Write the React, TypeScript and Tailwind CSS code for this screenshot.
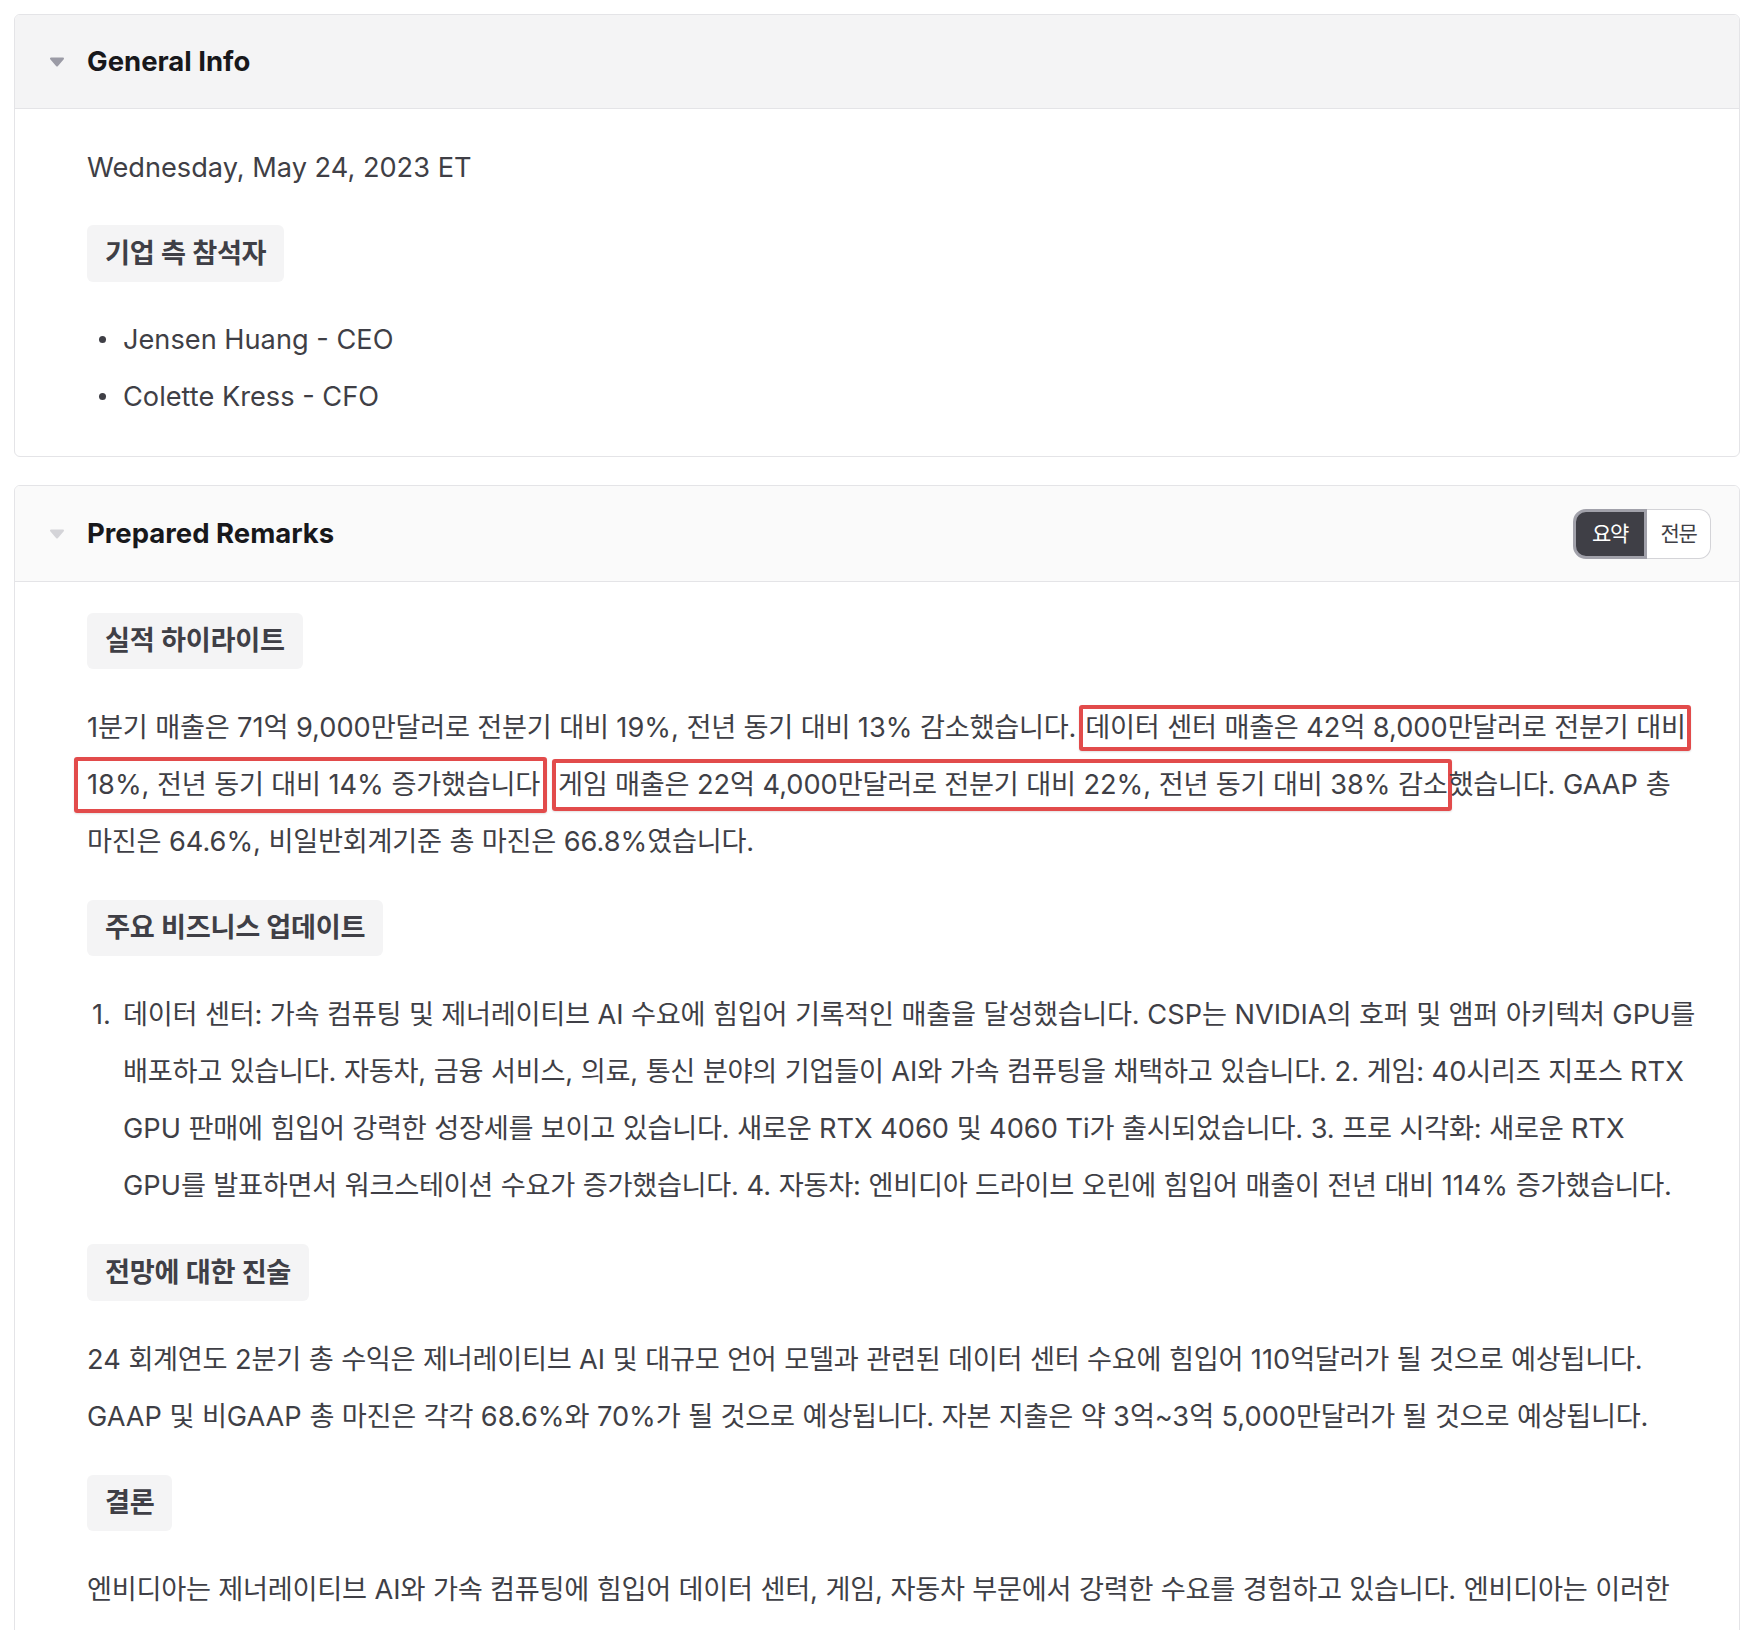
import React from 'react';

// Hangul runs get a touch of tracking so Noto's syllables sit like the reference face
const HANGUL = /([\uac00-\ud7a3]+)/;

function Ko({ text }: { text: string }) {
  return (
    <>
      {text.split(HANGUL).map((part, i) =>
        /[\uac00-\ud7a3]/.test(part) ? (
          <span key={i} className="tracking-[-0.01em]">
            {part}
          </span>
        ) : (
          part
        )
      )}
    </>
  );
}

const Caret = ({ color }: { color: string }) => (
  <svg width="16" height="10" viewBox="0 0 16 10" fill={color} stroke={color} strokeWidth="2" strokeLinejoin="round">
    <path d="M2 1.5h12L8 8.5z" />
  </svg>
);

const Badge = ({ text, tall = false }: { text: string; tall?: boolean }) => (
  <h3
    className={`flex items-center rounded-[6px] bg-[#f4f4f5] px-[18px] text-[27.2px] font-bold leading-none text-[#3f3f46] ${
      tall ? 'h-[57px]' : 'h-[56px]'
    }`}
  >
    <span>
      <Ko text={text} />
    </span>
  </h3>
);

const Bullet = ({ children }: { children: React.ReactNode }) => (
  <li className="flex items-center">
    <span className="ml-[12px] mr-[17px] h-[7px] w-[7px] shrink-0 rounded-full bg-[#3f3f46]" />
    <span>{children}</span>
  </li>
);

// red annotation box around a run of text
const Mark = ({ className, text }: { className: string; text: string }) => (
  <span
    className={`inline-block rounded-[3px] border-4 border-[#e24b4b] shadow-[0_1px_2px_rgba(0,0,0,0.12)] ${className}`}
  >
    <Ko text={text} />
  </span>
);

export default function App() {
  return (
    <div className="h-[1630px] overflow-hidden bg-white pt-[14px] pr-[16px] pl-[14px] font-[family-name:Inter,'Noto_Sans_CJK_KR',sans-serif] text-[#3f3f46]">
      {/* General Info */}
      <section className="overflow-hidden rounded-[6px] border border-[#e4e4e7]">
        <div className="flex h-[94px] items-center border-b border-[#e4e4e7] bg-[#f4f4f5] pl-[34px]">
          <Caret color="#9b9ba6" />
          <h2 className="ml-[22px] text-[27.5px] font-bold leading-none text-[#18181b]">General Info</h2>
        </div>
        <div className="flex flex-col items-start gap-[29px] px-[72px] pt-[30px] pb-[31px] text-[27.2px] leading-[57px]">
          <p>Wednesday, May 24, 2023 ET</p>
          <Badge text="기업 측 참석자" tall />
          <ul>
            <Bullet>Jensen Huang - CEO</Bullet>
            <Bullet>Colette Kress - CFO</Bullet>
          </ul>
        </div>
      </section>

      {/* Prepared Remarks */}
      <section className="mt-[28px] overflow-hidden rounded-[6px] border border-[#e4e4e7]">
        <div className="flex h-[96px] items-center border-b border-[#e4e4e7] bg-[#fafafa] pl-[34px]">
          <Caret color="#d4d4d8" />
          <h2 className="ml-[22px] text-[27.5px] font-bold leading-none text-[#18181b]">Prepared Remarks</h2>
          <div className="mr-[28px] ml-auto flex h-[50px] text-[21px] leading-none">
            <button className="flex w-[74px] items-center justify-center rounded-l-[13px] border-[3px] border-[#a1a1aa] bg-[#3f3f46] tracking-[-0.06em] text-white">
              요약
            </button>
            <button className="flex w-[64px] items-center justify-center rounded-r-[12px] border border-l-0 border-[#d4d4d8] bg-white tracking-[-0.06em] text-[#3f3f46]">
              전문
            </button>
          </div>
        </div>

        <div className="flex flex-col items-start gap-[30px] px-[72px] pt-[31px] pb-[40px] text-[27.2px] leading-[57px]">
          <Badge text="실적 하이라이트" />
          <p className="whitespace-nowrap">
            <Ko text="1분기 매출은 71억 9,000만달러로 전분기 대비 19%, 전년 동기 대비 13% 감소했습니다." />
            <Mark className="ml-[3px] pr-[1px] pl-[2px] leading-[38px]" text="데이터 센터 매출은 42억 8,000만달러로 전분기 대비" />
            <br />
            <Mark className="-ml-[13px] pr-[3px] pl-[9px] leading-[48px]" text="18%, 전년 동기 대비 14% 증가했습니다" />
            <Mark
              className="-mr-[3px] ml-[5px] pr-0 pl-[2px] leading-[44px]"
              text="게임 매출은 22억 4,000만달러로 전분기 대비 22%, 전년 동기 대비 38% 감소"
            />
            <Ko text="했습니다. GAAP 총" />
            <br />
            <Ko text="마진은 64.6%, 비일반회계기준 총 마진은 66.8%였습니다." />
          </p>

          <Badge text="주요 비즈니스 업데이트" />
          <ol>
            <li className="flex whitespace-nowrap">
              <span className="w-[36px] shrink-0 pl-[5px]">1.</span>
              <div>
                <Ko text="데이터 센터: 가속 컴퓨팅 및 제너레이티브 AI 수요에 힘입어 기록적인 매출을 달성했습니다. CSP는 NVIDIA의 호퍼 및 앰퍼 아키텍처 GPU를" />
                <br />
                <Ko text="배포하고 있습니다. 자동차, 금융 서비스, 의료, 통신 분야의 기업들이 AI와 가속 컴퓨팅을 채택하고 있습니다. 2. 게임: 40시리즈 지포스 RTX" />
                <br />
                <Ko text="GPU 판매에 힘입어 강력한 성장세를 보이고 있습니다. 새로운 RTX 4060 및 4060 Ti가 출시되었습니다. 3. 프로 시각화: 새로운 RTX" />
                <br />
                <Ko text="GPU를 발표하면서 워크스테이션 수요가 증가했습니다. 4. 자동차: 엔비디아 드라이브 오린에 힘입어 매출이 전년 대비 114% 증가했습니다." />
              </div>
            </li>
          </ol>

          <Badge text="전망에 대한 진술" tall />
          <p className="whitespace-nowrap">
            <Ko text="24 회계연도 2분기 총 수익은 제너레이티브 AI 및 대규모 언어 모델과 관련된 데이터 센터 수요에 힘입어 110억달러가 될 것으로 예상됩니다." />
            <br />
            <Ko text="GAAP 및 비GAAP 총 마진은 각각 68.6%와 70%가 될 것으로 예상됩니다. 자본 지출은 약 3억~3억 5,000만달러가 될 것으로 예상됩니다." />
          </p>

          <Badge text="결론" />
          <p className="whitespace-nowrap">
            <Ko text="엔비디아는 제너레이티브 AI와 가속 컴퓨팅에 힘입어 데이터 센터, 게임, 자동차 부문에서 강력한 수요를 경험하고 있습니다. 엔비디아는 이러한" />
          </p>
        </div>
      </section>
    </div>
  );
}
